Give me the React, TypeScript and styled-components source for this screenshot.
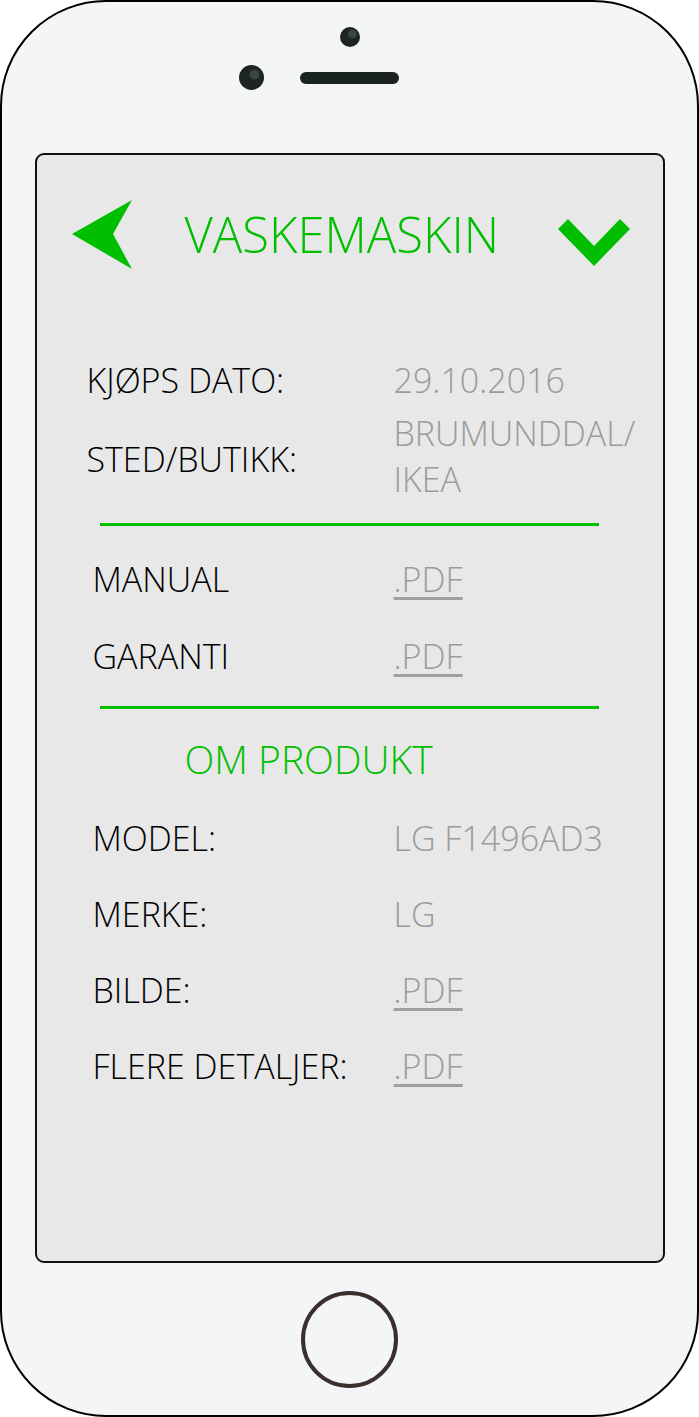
import React from "react"
import styled, { createGlobalStyle } from "styled-components"

const green = "#00bf00"
const grey = "#9b9b9b"

const GlobalStyle = createGlobalStyle`
  html, body {
    margin: 0;
    padding: 0;
    background: #ffffff;
  }
  body {
    font-family: "Open Sans", "Liberation Sans", sans-serif;
  }
`

const Phone = styled.div`
  box-sizing: border-box;
  width: 699px;
  height: 1417px;
  border: 2px solid #000;
  border-radius: 106px;
  background: #f4f5f7;
  display: flex;
  flex-direction: column;
  align-items: center;
  overflow: hidden;
`

const TopBezel = styled.div`
  height: 151px;
  display: flex;
  flex-direction: column;
  align-items: center;
`

const FrontCam = styled.div`
  width: 20px;
  height: 20px;
  margin-top: 25px;
  border-radius: 50%;
  background: radial-gradient(circle at 62% 35%, #3a4843 0 18%, #1c2521 30%);
`

const SensorRow = styled.div`
  margin-top: 18px;
  display: flex;
  align-items: center;
  gap: 36px;
`

const Camera = styled.div<{ $hidden?: boolean }>`
  width: 25px;
  height: 25px;
  border-radius: 50%;
  background: radial-gradient(circle at 62% 38%, #3a4843 0 16%, #1c2521 28%);
  visibility: ${(p) => (p.$hidden ? "hidden" : "visible")};
`

const Speaker = styled.div`
  width: 99px;
  height: 12px;
  border-radius: 6px;
  background: #19221e;
`

const Screen = styled.div`
  box-sizing: border-box;
  width: 630px;
  height: 1110px;
  border: 2px solid #111;
  border-radius: 9px;
  background: #e8e8e8;
  display: flex;
  flex-direction: column;
`

const BottomBezel = styled.div`
  flex: 1;
  display: flex;
  align-items: center;
  justify-content: center;
`

const HomeButton = styled.div`
  box-sizing: border-box;
  width: 97px;
  height: 97px;
  border-radius: 50%;
  border: 4px solid #3a2f2c;
`

const Header = styled.div`
  margin-top: 45px;
  height: 69px;
  display: flex;
  align-items: center;
  padding: 0 33px 0 35px;
`

const Title = styled.h1`
  margin: 0 0 0 53px;
  font-size: 49px;
  font-weight: 300;
  line-height: 69px;
  color: ${green};
`

const HeaderIcon = styled.svg`
  display: block;
  height: 69px;
`

const CheckIcon = styled(HeaderIcon)`
  margin-left: auto;
`

const Section = styled.div<{ $top: number; $gap: number }>`
  margin-top: ${(p) => p.$top}px;
  display: flex;
  flex-direction: column;
  gap: ${(p) => p.$gap}px;
`

const Row = styled.div`
  display: grid;
  grid-template-columns: 357px 1fr;
  align-items: center;
`

const Label = styled.span<{ $indent: number; $drop?: number }>`
  padding-left: ${(p) => p.$indent}px;
  padding-top: ${(p) => p.$drop ?? 0}px;
  font-size: 34px;
  font-weight: 300;
  line-height: 40px;
  color: #000;
  white-space: nowrap;
`

const Value = styled.span`
  font-size: 34px;
  font-weight: 300;
  line-height: 40px;
  color: ${grey};
`

const MultiValue = styled(Value)`
  line-height: 46px;
`

const FileLink = styled(Value)`
  text-decoration: underline;
  text-decoration-thickness: 3px;
  text-underline-offset: 5px;
  text-decoration-color: #a0a0a0;
`

const Divider = styled.hr<{ $top: number }>`
  margin: ${(p) => p.$top}px 0 0 63px;
  width: 499px;
  height: 3px;
  border: none;
  background: ${green};
`

const SubTitle = styled.h2`
  margin: 27px 0 0 148px;
  font-size: 39px;
  font-weight: 300;
  line-height: 46px;
  color: ${green};
`

const purchase = [
  { label: "KJØPS DATO:", value: ["29.10.2016"] },
  { label: "STED/BUTIKK:", value: ["BRUMUNDDAL/", "IKEA"] },
]

const documents = ["MANUAL", "GARANTI"]

const product = [
  { label: "MODEL:", value: "LG F1496AD3" },
  { label: "MERKE:", value: "LG" },
  { label: "BILDE:", file: true },
  { label: "FLERE DETALJER:", file: true },
]

const App = (): JSX.Element => {
  return (
    <>
      <GlobalStyle />
      <Phone>
        <TopBezel>
          <FrontCam />
          <SensorRow>
            <Camera />
            <Speaker />
            <Camera $hidden />
          </SensorRow>
        </TopBezel>
        <Screen>
          <Header>
            <HeaderIcon width="60" viewBox="72 200 60 69">
              <polygon points="72,234 132,200 113,234 132,269" fill={green} />
            </HeaderIcon>
            <Title>VASKEMASKIN</Title>
            <CheckIcon width="72" viewBox="558 200 72 69">
              <polygon points="558,229 568,219 594,246 620,219 630,229 594,266" fill={green} />
            </CheckIcon>
          </Header>

          <Section $top={91} $gap={10}>
            {purchase.map((item) => (
              <Row key={item.label}>
                <Label $indent={50} $drop={item.value.length > 1 ? 6 : 0}>
                  {item.label}
                </Label>
                {item.value.length > 1 ? (
                  <MultiValue>
                    {item.value.map((line) => (
                      <div key={line}>{line}</div>
                    ))}
                  </MultiValue>
                ) : (
                  <Value>{item.value[0]}</Value>
                )}
              </Row>
            ))}
          </Section>

          <Divider $top={21} />

          <Section $top={33} $gap={37}>
            {documents.map((doc) => (
              <Row key={doc}>
                <Label $indent={56}>{doc}</Label>
                <div>
                  <FileLink>.PDF</FileLink>
                </div>
              </Row>
            ))}
          </Section>

          <Divider $top={30} />

          <SubTitle>OM PRODUKT</SubTitle>

          <Section $top={36} $gap={36}>
            {product.map((item) => (
              <Row key={item.label}>
                <Label $indent={56}>{item.label}</Label>
                <div>{item.file ? <FileLink>.PDF</FileLink> : <Value>{item.value}</Value>}</div>
              </Row>
            ))}
          </Section>
        </Screen>
        <BottomBezel>
          <HomeButton />
        </BottomBezel>
      </Phone>
    </>
  )
}

export default App
